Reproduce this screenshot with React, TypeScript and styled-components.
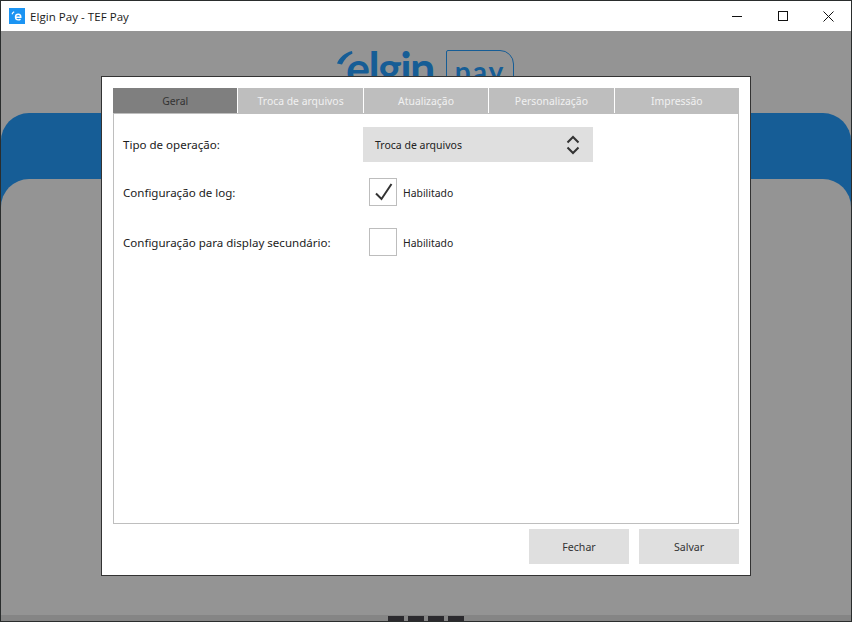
import React from "react";
import styled, { createGlobalStyle } from "styled-components";

const Global = createGlobalStyle`
  html, body { margin: 0; padding: 0; background: #2b2b2b; }
  body { width: 852px; height: 622px; overflow: hidden; }
  * { box-sizing: border-box; }
`;

const Window = styled.div`
  position: relative;
  width: 852px;
  height: 622px;
  border: 1px solid #2a2d2d;
  display: flex;
  flex-direction: column;
  overflow: hidden;
  background: #949494;
`;

const TitleBar = styled.div`
  height: 30px;
  flex: none;
  background: #fff;
  display: flex;
  align-items: center;
  padding-left: 8px;
  font: 11.5px "Open Sans", "Liberation Sans", sans-serif;
  color: #1a1a1a;
`;

const TitleText = styled.span`
  flex: 1;
  margin-left: 5px;
  letter-spacing: 0.05px;
`;

const WinButton = styled.div`
  width: 45.5px;
  height: 30px;
  display: flex;
  align-items: center;
  justify-content: center;
`;

const Main = styled.div`
  flex: 1;
  display: flex;
  flex-direction: column;
  background: #949494;
  position: relative;
`;

const LogoRow = styled.div`
  height: 82px;
  flex: none;
  padding: 13px 0 0 345px;
  display: flex;
  align-items: flex-start;
  color: #165d96;
`;

const LogoWord = styled.div`
  position: relative;
  width: 100px;
  font: 700 45px/48px "Lato", "Noto Sans", sans-serif;
  letter-spacing: -1.6px;
  color: #165d96;
`;

const Swoosh = styled.svg`
  position: absolute;
  left: -9px;
  top: 7px;
`;

const PayBox = styled.div`
  width: 68px;
  height: 40px;
  margin-top: 6px;
  border: 1px solid #165d96;
  border-top-right-radius: 14px;
  border-top-left-radius: 2px;
  font: 700 28px/40px "Lato", "Noto Sans", sans-serif;
  letter-spacing: 2px;
  text-align: center;
  color: #165d96;
`;

const BlueCard = styled.div`
  height: 120px;
  flex: none;
  background: #165d96;
  border-radius: 28px 28px 0 0;
  padding-top: 66px;
`;

const GrayCard = styled.div`
  height: 100%;
  background: #949494;
  border-radius: 28px 28px 0 0;
`;

const Filler = styled.div`
  flex: 1;
  background: #949494;
`;

const Footer = styled.div`
  height: 6px;
  flex: none;
  background: #858585;
  display: flex;
  justify-content: center;
  align-items: flex-end;
  gap: 4px;
  padding-right: 1px;
`;

const Dot = styled.div`
  width: 16px;
  height: 5px;
  background: #2b2a2e;
`;

const Modal = styled.div`
  position: absolute;
  left: 100px;
  top: 75px;
  width: 650px;
  height: 500px;
  background: #fff;
  border: 1px solid #333;
  padding: 11px;
  display: flex;
  flex-direction: column;
  font-family: "Noto Sans", "Open Sans", sans-serif;
`;

const Tabs = styled.div`
  height: 26px;
  flex: none;
  display: flex;
  gap: 1px;
`;

const Tab = styled.div<{ $active?: boolean }>`
  flex: 1 1 0;
  height: 25px;
  background: ${(p) => (p.$active ? "#7f7f7f" : "#bebebe")};
  color: ${(p) => (p.$active ? "#333" : "#f1f1f1")};
  display: flex;
  align-items: center;
  justify-content: center;
  font-size: 10.4px;
`;

const Panel = styled.div`
  height: 411px;
  flex: none;
  margin-top: -1px;
  border: 1px solid #bebebe;
  padding: 13px 9px;
  display: flex;
  flex-direction: column;
`;

const Row = styled.div<{ $h: number }>`
  height: ${(p) => p.$h}px;
  display: flex;
  align-items: center;
`;

const Label = styled.div`
  width: 240px;
  font-size: 11.55px;
  color: #1c1c1c;
`;

const Select = styled.div`
  width: 230px;
  height: 35px;
  background: #dfdfdf;
  display: flex;
  align-items: center;
  justify-content: space-between;
  padding: 0 13px 0 12px;
  font-size: 10.5px;
  color: #222;
`;

const CheckWrap = styled.div`
  display: flex;
  align-items: center;
  gap: 6px;
  margin-left: 6px;
  font-size: 10.4px;
  color: #222;
`;

const CheckText = styled.span`
  padding-top: 2px;
`;

const Box = styled.div`
  width: 28px;
  height: 28px;
  border: 1px solid #bdbdbd;
  background: #fff;
  display: flex;
  align-items: center;
  justify-content: center;
`;

const Actions = styled.div`
  display: flex;
  justify-content: flex-end;
  gap: 10px;
  margin-top: 5px;
`;

const Button = styled.div`
  width: 100px;
  height: 35px;
  background: #dfdfdf;
  display: flex;
  align-items: center;
  justify-content: center;
  font-size: 10.6px;
  color: #333;
`;

export default function App() {
  return (
    <Window>
      <Global />
      <TitleBar>
        <svg width="16" height="16" viewBox="0 0 16 16">
          <rect width="16" height="16" fill="#1b94f3" />
          <path d="M3 6.2 C3.5 5 4.2 4.2 5.2 3.7" stroke="#fff" strokeWidth="1.2" fill="none" />
          <path d="M6.6 9.2h5.2c0-1.8-1-2.9-2.5-2.9S6.5 7.4 6.5 9s1.1 2.9 2.8 2.9c.9 0 1.6-.3 2.2-.8" stroke="#fff" strokeWidth="1.4" fill="none" />
        </svg>
        <TitleText>Elgin Pay - TEF Pay</TitleText>
        <WinButton>
          <svg width="10" height="10" viewBox="0 0 10 10"><path d="M0 5.5h10" stroke="#111" strokeWidth="1" /></svg>
        </WinButton>
        <WinButton>
          <svg width="10" height="10" viewBox="0 0 10 10"><rect x=".5" y=".5" width="9" height="9" fill="none" stroke="#111" /></svg>
        </WinButton>
        <WinButton>
          <svg width="11" height="11" viewBox="0 0 11 11"><path d="M.5.5l10 10M10.5.5l-10 10" stroke="#111" strokeWidth="1" fill="none" /></svg>
        </WinButton>
      </TitleBar>
      <Main>
        <LogoRow>
          <LogoWord>
            <Swoosh width="16" height="14" viewBox="0 0 16 14">
              <path d="M0 12.5 C2.5 6.5 7.5 2 15 0 L15.5 2.4 C10.5 4.8 7.5 8.5 5 13.5 Z" fill="#165d96" />
            </Swoosh>
            elgin
          </LogoWord>
          <PayBox>pay</PayBox>
        </LogoRow>
        <BlueCard>
          <GrayCard />
        </BlueCard>
        <Filler />
        <Footer>
          <Dot /><Dot /><Dot /><Dot />
        </Footer>
      </Main>
      <Modal>
        <Tabs>
          <Tab $active>Geral</Tab>
          <Tab>Troca de arquivos</Tab>
          <Tab>Atualização</Tab>
          <Tab>Personalização</Tab>
          <Tab>Impressão</Tab>
        </Tabs>
        <Panel>
          <Row $h={35}>
            <Label>Tipo de operação:</Label>
            <Select>
              Troca de arquivos
              <svg width="14" height="20" viewBox="0 0 14 20">
                <path d="M1.5 7.5L7 2l5.5 5.5M1.5 12.5L7 18l5.5-5.5" fill="none" stroke="#333" strokeWidth="2" />
              </svg>
            </Select>
          </Row>
          <Row $h={60}>
            <Label>Configuração de log:</Label>
            <CheckWrap>
              <Box>
                <svg width="20" height="20" viewBox="0 0 20 20">
                  <path d="M3 11.5l5.5 5.5L18.5 2" fill="none" stroke="#333" strokeWidth="2" />
                </svg>
              </Box>
              <CheckText>Habilitado</CheckText>
            </CheckWrap>
          </Row>
          <Row $h={40}>
            <Label>Configuração para display secundário:</Label>
            <CheckWrap>
              <Box />
              <CheckText>Habilitado</CheckText>
            </CheckWrap>
          </Row>
        </Panel>
        <Actions>
          <Button>Fechar</Button>
          <Button>Salvar</Button>
        </Actions>
      </Modal>
    </Window>
  );
}
